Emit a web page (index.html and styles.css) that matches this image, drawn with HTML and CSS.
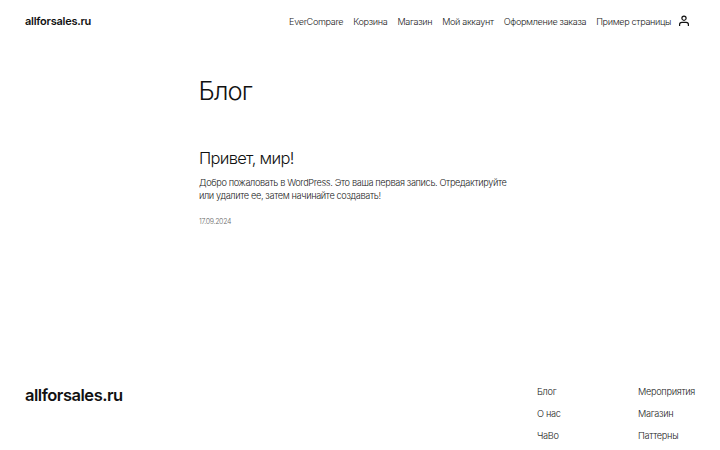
FILE: index.html
```html
<!DOCTYPE html>
<html lang="ru">
<head>
<meta charset="utf-8">
<title>Блог – allforsales.ru</title>
<link rel="stylesheet" href="styles.css">
</head>
<body>
<div class="page">
<header class="site-header">
  <a class="site-title" href="#">allforsales.ru</a>
  <nav class="main-nav">
    <a href="#">EverCompare</a>
    <a href="#">Корзина</a>
    <a href="#">Магазин</a>
    <a href="#">Мой аккаунт</a>
    <a href="#">Оформление заказа</a>
    <a href="#">Пример страницы</a>
    <a class="account" href="#" aria-label="Аккаунт">
      <svg viewBox="0 0 12 12" width="12" height="12" fill="none" stroke="#111" stroke-width="1.2">
        <circle cx="6" cy="3.2" r="2.1"/>
        <path d="M1.6 11V9.6C1.6 8.3 2.5 7.4 3.8 7.4H8.2C9.5 7.4 10.4 8.3 10.4 9.6V11"/>
      </svg>
    </a>
  </nav>
</header>
<main class="content">
  <h1 class="page-title">Блог</h1>
  <article class="post">
    <h2 class="post-title">Привет, мир!</h2>
    <p class="post-text">Добро пожаловать в WordPress. Это ваша первая запись. Отредактируйте или удалите ее, затем начинайте создавать!</p>
    <time class="post-date">17.09.2024</time>
  </article>
</main>
<footer class="site-footer">
  <a class="footer-title" href="#">allforsales.ru</a>
  <div class="footer-links">
    <ul class="footer-col">
      <li><a href="#">Блог</a></li>
      <li><a href="#">О нас</a></li>
      <li><a href="#">ЧаВо</a></li>
    </ul>
    <ul class="footer-col">
      <li><a href="#">Мероприятия</a></li>
      <li><a href="#">Магазин</a></li>
      <li><a href="#">Паттерны</a></li>
    </ul>
  </div>
</footer>
</div>
</body>
</html>
```
FILE: styles.css
```css
* { box-sizing: border-box; }
html, body { margin: 0; height: 100%; overflow: hidden; background: #fff; }
body { font-family: Inter, "Noto Sans", sans-serif; color: #111; }
a { color: inherit; text-decoration: none; }
.page { width: 720px; height: 450px; display: flex; flex-direction: column; overflow: hidden; }

.site-header { display: flex; justify-content: space-between; align-items: center; padding: 7px 30px 0 25px; height: 28px; flex: none; box-sizing: content-box; }
.site-title { font-size: 11px; font-weight: 600; letter-spacing: -0.25px; }
.main-nav { display: flex; align-items: center; gap: 10px; font-size: 9.1px; font-weight: 300; letter-spacing: -0.33px; color: #222; }
.account { display: flex; margin-left: -3px; }

.content { padding: 0 0 0 199px; flex: 1; }
.page-title { margin: 38px 0 0 -0.5px; font-size: 25.5px; font-weight: 300; line-height: 36px; letter-spacing: -0.9px; }
.post { width: 322px; margin-top: 36px; }
.post-title { margin: 0; font-size: 16.5px; font-weight: 300; line-height: 26px; letter-spacing: -0.7px; }
.post-text { margin: 5px 0 0; font-size: 9.2px; font-weight: 300; line-height: 13.4px; letter-spacing: -0.36px; color: #222; }
.post-date { display: block; margin-top: 14px; font-size: 7px; font-weight: 300; color: #666; letter-spacing: -0.3px; }

.site-footer { display: flex; justify-content: space-between; padding: 7px 25px 0 25px; height: 72px; flex: none; }
.footer-title { font-size: 16.5px; font-weight: 600; line-height: 22px; letter-spacing: -0.47px; margin-top: -1px; }
.footer-links { display: flex; gap: 0; }
.footer-col { list-style: none; margin: 0; padding: 0; width: 101px; font-size: 9.2px; font-weight: 300; letter-spacing: -0.3px; color: #222; }
.footer-col:last-child { width: 57px; }
.footer-col li { height: 22px; line-height: 14px; white-space: nowrap; }
```
